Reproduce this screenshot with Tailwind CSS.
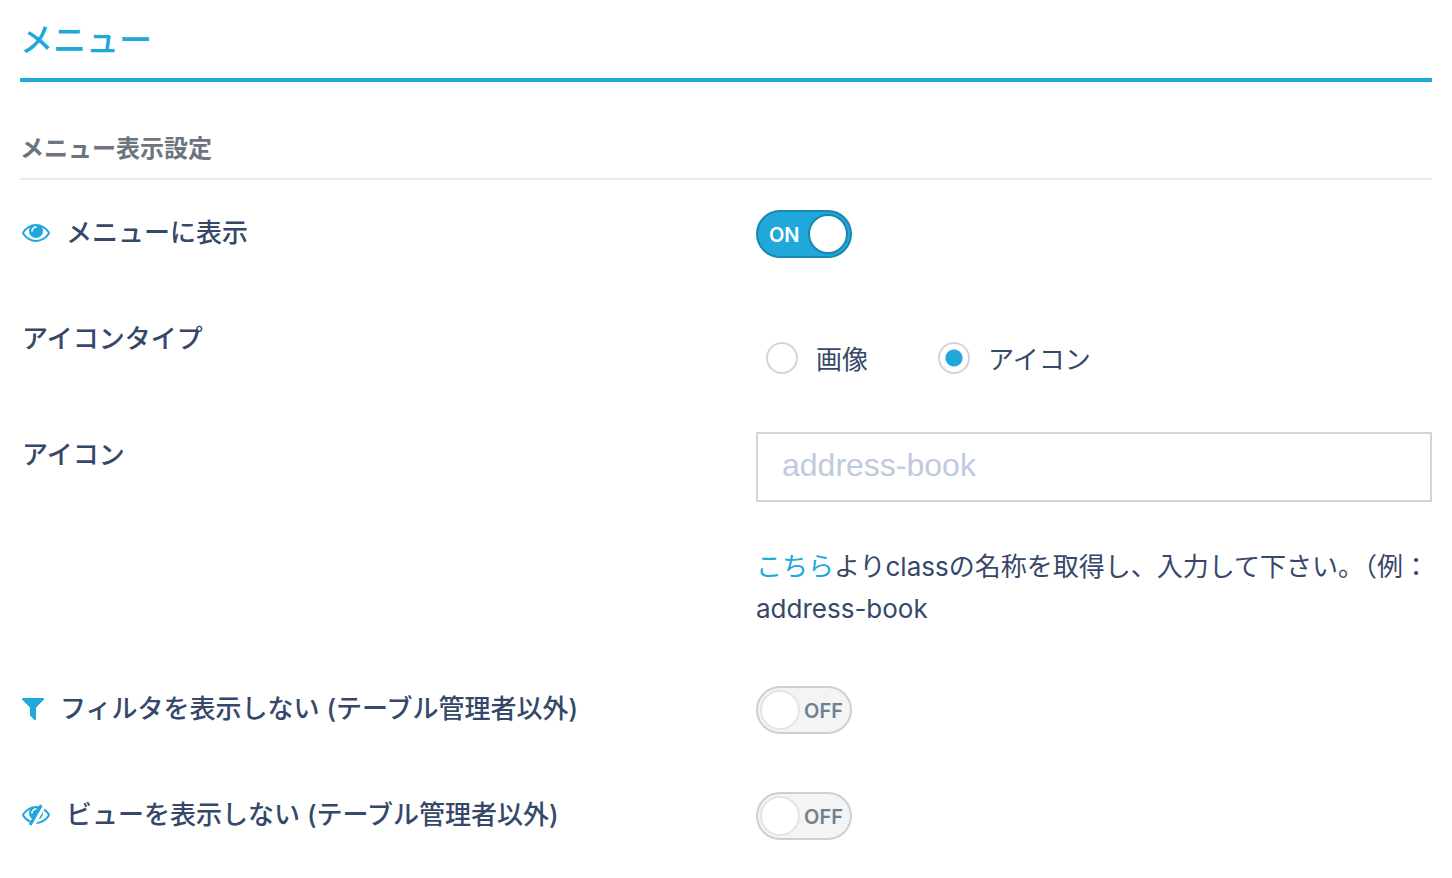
<!DOCTYPE html>
<html lang="ja">
  <head>
    <meta charset="UTF-8" />
    <meta name="viewport" content="width=device-width, initial-scale=1.0" />
    <title>メニュー</title>
    <script src="https://cdn.jsdelivr.net/npm/@tailwindcss/browser@4"></script>
  </head>
  <body
    class="bg-white text-[#364869] text-[26px] leading-[42px] font-['Inter','Noto_Sans_CJK_JP',sans-serif]"
  >
    <main class="px-5 pb-9">
      <h1
        class="pt-4 pb-[14px] text-[33px] leading-[48px] font-medium text-[#21a8da] border-b-4 border-[#21a8da]"
      >
        メニュー
      </h1>

      <form>
        <h2
          class="mt-12 pb-[10px] text-[24px] leading-[38px] font-bold text-[#6c757d] border-b-2 border-[#e6ebf1]"
        >
          メニュー表示設定
        </h2>

        <div class="mt-[30px] flex flex-col gap-[58px]">
          <!-- Show in menu -->
          <div class="grid grid-cols-2 gap-[60px]">
            <label for="show-menu" class="flex items-center gap-4 h-[46px] pl-[2px] font-medium">
              <svg class="w-7 h-7 shrink-0 fill-[#21a8da]" viewBox="0 64 1792 1792" aria-hidden="true">
                <path d="M1664 960q-152-236-381-353 61 104 61 225 0 185-131.5 316.5t-316.5 131.5-316.5-131.5-131.5-316.5q0-121 61-225-229 117-381 353 133 205 333.5 326.5t434.5 121.5 434.5-121.5 333.5-326.5zm-720-384q0-20-14-34t-34-14q-125 0-214.5 89.5t-89.5 214.5q0 20 14 34t34 14 34-14 14-34q0-86 61-147t147-61q20 0 34-14t14-34zm848 384q0 34-20 69-140 230-376.5 368.5t-499.5 138.5-499.5-139-376.5-368q-20-35-20-69t20-69q140-229 376.5-368t499.5-139 499.5 139 376.5 368q20 35 20 69z" />
              </svg>
              メニューに表示
            </label>
            <label class="group relative w-24 h-12 cursor-pointer">
              <input id="show-menu" type="checkbox" class="sr-only" checked />
              <span
                class="flex items-center justify-between group-has-checked:flex-row-reverse h-12 pl-[2px] pr-[7px] group-has-checked:pl-[11px] group-has-checked:pr-[2px] rounded-full border-2 border-[#cfcfcf] bg-[#f4f4f4] group-has-checked:border-[#1a87b0] group-has-checked:bg-[#21a8da]"
              >
                <span class="size-10 shrink-0 rounded-full border-2 border-[#e1e5f0] group-has-checked:border-[#1a87b0] bg-white"></span>
                <span class="hidden group-has-checked:inline pt-[2px] text-[20px] leading-6 font-semibold text-white">ON</span>
                <span class="group-has-checked:hidden pt-[2px] text-[20px] leading-6 font-semibold text-[#718090]">OFF</span>
              </span>
            </label>
          </div>

          <!-- Icon type -->
          <div class="grid grid-cols-2 gap-[60px]" role="radiogroup" aria-labelledby="icon-type">
            <div id="icon-type" class="flex items-center h-[46px] pl-[2px] font-medium">アイコンタイプ</div>
            <div class="flex gap-[70px] pt-[26px] pl-[10px]">
              <label class="flex items-center gap-[18px] h-8">
                <input
                  type="radio"
                  name="icon_type"
                  value="image"
                  class="appearance-none size-8 rounded-full border-2 border-[#d4d4d4] bg-white checked:bg-[radial-gradient(circle,#21a8da_8px,transparent_9px)]"
                />
                <span class="pt-1">画像</span>
              </label>
              <label class="flex items-center gap-[18px] h-8">
                <input
                  type="radio"
                  name="icon_type"
                  value="icon"
                  checked
                  class="appearance-none size-8 rounded-full border-2 border-[#d4d4d4] bg-white checked:bg-[radial-gradient(circle,#21a8da_8px,transparent_9px)]"
                />
                <span class="pt-1">アイコン</span>
              </label>
            </div>
          </div>

          <!-- Icon class -->
          <div class="grid grid-cols-2 gap-[60px]">
            <label for="icon" class="flex items-center h-[46px] pl-[2px] font-medium">アイコン</label>
            <div>
              <input
                id="icon"
                type="text"
                placeholder="address-book"
                class="block w-full h-[70px] px-6 pb-1 border-2 border-[#d4d4d4] font-['Liberation_Sans',sans-serif] text-[32px] placeholder:text-[#c0cade] focus:outline-none"
              />
              <p class="mt-11 -mb-[2px]">
                <a href="#" class="text-[#21a8da]">こちら</a>よりclassの名称を取得し、入力して下さい。（例：address-book
              </p>
            </div>
          </div>

          <!-- Hide filter -->
          <div class="grid grid-cols-2 gap-[60px]">
            <label for="hide-filter" class="flex items-center gap-4 h-[46px] pl-[2px] font-medium">
              <svg class="w-[22px] h-[22px] shrink-0 fill-[#21a8da]" viewBox="192 256 1408 1408" aria-hidden="true">
                <path d="M1595 295q17 41-14 70l-493 493v742q0 42-39 59-13 5-25 5-27 0-45-19l-256-256q-19-19-19-45v-486l-493-493q-31-29-14-70 17-39 59-39h1280q42 0 59 39z" />
              </svg>
              フィルタを表示しない (テーブル管理者以外)
            </label>
            <label class="group relative w-24 h-12 cursor-pointer">
              <input id="hide-filter" type="checkbox" class="sr-only" />
              <span
                class="flex items-center justify-between group-has-checked:flex-row-reverse h-12 pl-[2px] pr-[7px] group-has-checked:pl-[11px] group-has-checked:pr-[2px] rounded-full border-2 border-[#cfcfcf] bg-[#f4f4f4] group-has-checked:border-[#1a87b0] group-has-checked:bg-[#21a8da]"
              >
                <span class="size-10 shrink-0 rounded-full border-2 border-[#e1e5f0] group-has-checked:border-[#1a87b0] bg-white"></span>
                <span class="hidden group-has-checked:inline pt-[2px] text-[20px] leading-6 font-semibold text-white">ON</span>
                <span class="group-has-checked:hidden pt-[2px] text-[20px] leading-6 font-semibold text-[#718090]">OFF</span>
              </span>
            </label>
          </div>

          <!-- Hide view -->
          <div class="grid grid-cols-2 gap-[60px]">
            <label for="hide-view" class="flex items-center gap-4 h-[46px] pl-[2px] font-medium">
              <svg class="w-7 h-7 shrink-0 fill-[#21a8da]" viewBox="0 64 1792 1792" aria-hidden="true">
                <path d="M555 1335l78-141q-87-63-136-159t-49-203q0-121 61-225-229 117-381 353 167 258 427 375zm389-759q0-20-14-34t-34-14q-125 0-214.5 89.5t-89.5 214.5q0 20 14 34t34 14 34-14 14-34q0-86 61-147t147-61q20 0 34-14t14-34zm363-191q0 7-1 9-106 189-316 567t-315 566l-49 89q-10 16-28 16-12 0-134-70-16-10-16-28 0-12 44-87-143-65-263.5-173t-208.5-245q-20-31-20-69t20-69q153-235 380-371t496-136q89 0 180 17l54-97q10-16 28-16 5 0 18 6t31 15.5 33 18.5 31.5 18.5 19.5 11.5q16 10 16 27zm37 447q0 139-79 253.5t-209 164.5l280-502q8 45 8 84zm448 128q0 35-20 69-39 64-109 145-150 172-347.5 267t-419.5 95l74-132q212-18 392.5-137t301.5-307q-115-179-282-294l63-112q95 64 182.5 153t144.5 184q20 34 20 69z" />
              </svg>
              ビューを表示しない (テーブル管理者以外)
            </label>
            <label class="group relative w-24 h-12 cursor-pointer">
              <input id="hide-view" type="checkbox" class="sr-only" />
              <span
                class="flex items-center justify-between group-has-checked:flex-row-reverse h-12 pl-[2px] pr-[7px] group-has-checked:pl-[11px] group-has-checked:pr-[2px] rounded-full border-2 border-[#cfcfcf] bg-[#f4f4f4] group-has-checked:border-[#1a87b0] group-has-checked:bg-[#21a8da]"
              >
                <span class="size-10 shrink-0 rounded-full border-2 border-[#e1e5f0] group-has-checked:border-[#1a87b0] bg-white"></span>
                <span class="hidden group-has-checked:inline pt-[2px] text-[20px] leading-6 font-semibold text-white">ON</span>
                <span class="group-has-checked:hidden pt-[2px] text-[20px] leading-6 font-semibold text-[#718090]">OFF</span>
              </span>
            </label>
          </div>
        </div>
      </form>
    </main>
  </body>
</html>
